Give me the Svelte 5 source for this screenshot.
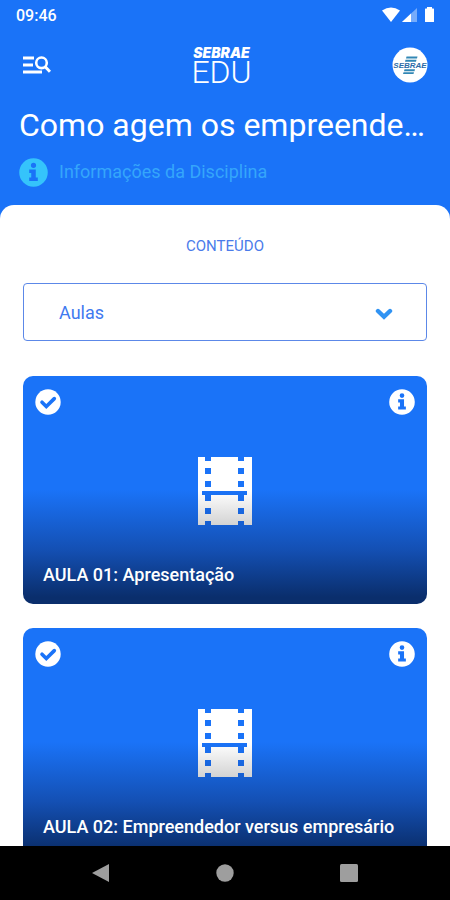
<script lang="ts">
  const sections = ['Aulas'];
  let section = $state('Aulas');

  const lessons = [
    { id: 1, title: 'AULA 01: Apresentação', done: true },
    { id: 2, title: 'AULA 02: Empreendedor versus empresário', done: true },
  ];
</script>

{#snippet infoIcon()}
  <svg viewBox="0 0 512 512" aria-hidden="true">
    <path
      fill="currentColor"
      fill-rule="evenodd"
      d="M256 4a252 252 0 1 0 0 504a252 252 0 0 0 0-504zM256 84a46 46 0 1 1 0 92a46 46 0 0 1 0-92zM180 204h116v140h36v60H180v-60h36v-80h-36z"
    />
  </svg>
{/snippet}

<div class="screen">
  <div class="status">
    <span>09:46</span>
    <svg width="54" height="16" viewBox="0 0 54 16" fill="#fff" aria-hidden="true">
      <path d="M0 3.5Q9 -2.5 18 3.5L9 15z" />
      <path d="M35 1v14H20z" opacity="0.4" />
      <path d="M29 6.600v8.400h-9z" />
      <path d="M45 1.500V0h5v1.500h1.500q.5 0 .5.500v12.500q0 .5-.5.500h-8q-.5 0-.5-.5V2q0-.5.5-.5z" />
    </svg>
  </div>

  <header>
    <div class="toolbar">
      <button class="menu" aria-label="Menu e busca">
        <svg width="28" height="18" viewBox="0 0 28 18" fill="none" stroke="#fff" aria-hidden="true">
          <path d="M0 2h11M0 9h10M0 16h19" stroke-width="2.800" />
          <circle cx="18.500" cy="6.800" r="5.300" stroke-width="2.600" />
          <path d="M22 10.500l5 5.300" stroke-width="3" />
        </svg>
      </button>

      <div class="logo">
        <span class="brand">SEBRAE</span>
        <span class="product">EDU</span>
      </div>

      <button class="avatar" aria-label="Perfil">
        <svg width="36" height="36" viewBox="0 0 36 36" aria-hidden="true">
          <circle cx="18" cy="18" r="17.500" fill="#fff" />
          <g fill="#3287b5">
            <path d="M14.500 9.500h11l-.5 2h-11zM13.500 12.700h11l-.5 2h-11zM12.500 22.200h10.500l-.5 2h-10.500zM11.500 25.300h10.500l-.5 1.700h-10.500z" />
          </g>
          <text x="18" y="21" text-anchor="middle">SEBRAE</text>
        </svg>
      </button>
    </div>

    <h1>Como agem os empreendedores</h1>

    <a class="about" href="#disciplina">
      {@render infoIcon()}
      Informações da Disciplina
    </a>
  </header>

  <main>
    <label for="section">CONTEÚDO</label>
    <div class="select">
      <select id="section" bind:value={section}>
        {#each sections as name}
          <option>{name}</option>
        {/each}
      </select>
      <svg width="18" height="12" viewBox="0 0 18 12" fill="none" aria-hidden="true">
        <path d="M3 3l6 5.800L15 3" stroke="#3093f3" stroke-width="4.400" stroke-linecap="round" />
      </svg>
    </div>

    {#each lessons as lesson (lesson.id)}
      <article class="card">
        <div class="card-top">
          {#if lesson.done}
            <svg viewBox="0 0 26 26" aria-hidden="true">
              <circle cx="13" cy="13" r="12.700" fill="#fff" />
              <path d="M7 13.200l4.300 4.300L19.300 9.600" fill="none" stroke="#1a73f8" stroke-width="3.600" stroke-linecap="round" />
            </svg>
          {/if}
          <button aria-label="Informações da aula">
            {@render infoIcon()}
          </button>
        </div>
        <svg class="film" width="54" height="68" viewBox="0 0 54 68" aria-hidden="true">
          <defs>
            <linearGradient id="film-{lesson.id}" x2="0" y2="1">
              <stop offset="0.5" stop-color="#fff" />
              <stop offset="1" stop-color="#d3d3d3" />
            </linearGradient>
          </defs>
          <path
            fill="url(#film-{lesson.id})"
            fill-rule="evenodd"
            d="M0 0h7v4h6V0h27v4h6V0h8v68h-8v-4h-6v4H13v-4H7v4H0zM7 11v6h6v-6zM40 11v6h6v-6zM7 24v6h6v-6zM40 24v6h6v-6zM4 34v4h3v6h6v-6h27v6h6v-6h3v-4zM7 51v6h6v-6zM40 51v6h6v-6z"
          />
        </svg>
        <h2>{lesson.title}</h2>
      </article>
    {/each}
  </main>

  <nav>
    <button aria-label="Voltar">
      <svg width="20" height="20" viewBox="0 0 20 20"><path d="M18 1v18L1 10z" /></svg>
    </button>
    <button aria-label="Início">
      <svg width="20" height="20" viewBox="0 0 20 20"><circle cx="10" cy="10" r="8.700" /></svg>
    </button>
    <button aria-label="Recentes">
      <svg width="20" height="20" viewBox="0 0 20 20"><rect x="1" y="1" width="18" height="18" rx="1.500" /></svg>
    </button>
  </nav>
</div>

<style>
  :global(body) {
    margin: 0;
    font-family: Roboto, 'Liberation Sans', sans-serif;
  }

  .screen {
    display: flex;
    flex-direction: column;
    height: 100vh;
    background: #1a73f8;
  }

  button {
    display: flex;
    padding: 0;
    border: 0;
    background: none;
    color: inherit;
    cursor: pointer;
  }

  .status {
    display: flex;
    align-items: center;
    justify-content: space-between;
    height: 30px;
    padding: 0 14px 0 16px;
    color: #fff;
    font-size: 16px;
    font-weight: 500;
  }

  header {
    padding: 0 19px 18px;
  }

  .toolbar {
    display: grid;
    grid-template-columns: 1fr auto 1fr;
    align-items: center;
    height: 70px;
    padding: 0 3px 0 4px;
  }

  .avatar {
    justify-self: end;
  }

  .avatar text {
    fill: #2c6ca8;
    font-size: 8px;
    font-style: italic;
    font-weight: 700;
  }

  .logo {
    display: flex;
    flex-direction: column;
    align-items: center;
    margin-right: 8px;
    color: #fff;
  }

  .brand {
    font-family: Inter, 'Liberation Sans', sans-serif;
    font-size: 14px;
    font-style: italic;
    font-weight: 900;
    line-height: 14px;
  }

  .product {
    font-size: 32px;
    font-weight: 300;
    line-height: 24px;
  }

  h1 {
    margin: 4px 0 0;
    overflow: hidden;
    color: #fff;
    font-size: 32px;
    font-weight: 400;
    line-height: 42px;
    text-overflow: ellipsis;
    white-space: nowrap;
  }

  .about {
    display: flex;
    align-items: center;
    gap: 11px;
    margin-top: 11px;
    color: #35a6fb;
    font-size: 18px;
    line-height: 30px;
    text-decoration: none;
  }

  .about svg {
    width: 29px;
    height: 29px;
    color: #35c4fb;
  }

  main {
    display: flex;
    flex: 1;
    flex-direction: column;
    min-height: 0;
    padding: 0 23px;
    overflow: hidden;
    border-radius: 14px 14px 0 0;
    background: #fff;
  }

  label {
    margin: 31px 0 27px;
    color: #4b7bea;
    font-size: 15px;
    line-height: 20px;
    text-align: center;
  }

  .select {
    position: relative;
    flex-shrink: 0;
    margin-bottom: 35px;
  }

  select {
    display: block;
    width: 100%;
    height: 58px;
    padding: 0 35px;
    border: 1px solid #5c88e8;
    border-radius: 4px;
    appearance: none;
    background: #fff;
    color: #3f7af0;
    font: inherit;
    font-size: 18px;
  }

  .select svg {
    position: absolute;
    top: 25px;
    right: 34px;
    pointer-events: none;
  }

  .card {
    display: flex;
    flex-direction: column;
    flex-shrink: 0;
    box-sizing: border-box;
    height: 228px;
    margin-bottom: 24px;
    padding: 13px 12px 18px;
    border-radius: 10px;
    background: linear-gradient(#1a73f8 50%, #1450b4 76%, #0a2e6c 97%);
    color: #fff;
  }

  .card-top {
    display: flex;
    justify-content: space-between;
  }

  .card-top svg {
    width: 26px;
    height: 26px;
  }

  .film {
    align-self: center;
    margin-top: 42px;
  }

  h2 {
    margin: auto 0 0 8px;
    font-size: 18px;
    font-weight: 500;
    line-height: 22px;
  }

  nav {
    display: flex;
    align-items: center;
    justify-content: space-between;
    height: 54px;
    padding: 0 91px;
    background: #000;
  }

  nav svg {
    fill: #9e9e9e;
  }
</style>
